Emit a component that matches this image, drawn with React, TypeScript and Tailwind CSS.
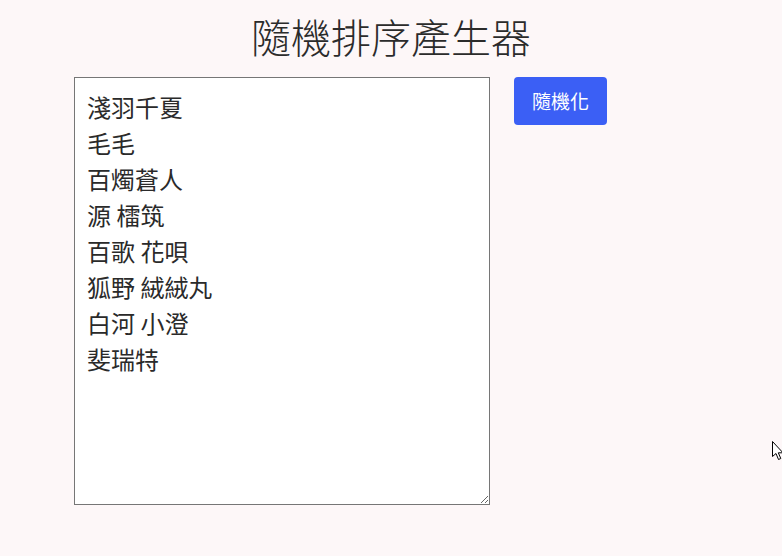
import { useState } from 'react'

const initial = `淺羽千夏
毛毛
百燭蒼人
源 檑筑
百歌 花唄
狐野 絨絨丸
白河 小澄
斐瑞特`

export default function App() {
  const [text, setText] = useState(initial)

  function shuffle() {
    const lines = text.split('\n').filter(l => l.trim())
    for (let i = lines.length - 1; i > 0; i--) {
      const j = Math.floor(Math.random() * (i + 1))
      ;[lines[i], lines[j]] = [lines[j], lines[i]]
    }
    setText(lines.join('\n'))
  }

  return (
    <div
      className="relative min-h-[556px] bg-[#fdf7f8] text-[#212529]"
      style={{ fontFamily: '"Noto Sans CJK TC", "Noto Sans", sans-serif' }}
    >
      <h1 className="pt-[8px] text-center text-[40px] leading-[56px] font-light text-[#2b2b2b]">隨機排序產生器</h1>

      <div className="mx-auto mt-[13px] flex w-[634px] items-start gap-6">
        {/* Names */}
        <textarea
          value={text}
          onChange={e => setText(e.target.value)}
          className="h-[428px] w-[416px] resize-y border border-[#767676] bg-white px-[12px] py-[11px] text-[24px] leading-[36px] text-[#2a2a2a] outline-none"
        />
        <button
          onClick={shuffle}
          className="h-[48px] w-[93px] rounded-[4px] bg-[#3b5ff5] text-[19px] text-white hover:bg-[#3152e0]"
        >
          隨機化
        </button>
      </div>

      {/* mouse pointer */}
      <svg className="absolute left-[772px] top-[441px]" width="12" height="20" viewBox="0 0 12 20">
        <path d="M0.5 0.5 L0.5 15.5 L4 12.5 L6.5 18.5 L8.8 17.5 L6.3 11.8 L11 11.8 Z" fill="white" stroke="black" strokeWidth="1" />
      </svg>
    </div>
  )
}
